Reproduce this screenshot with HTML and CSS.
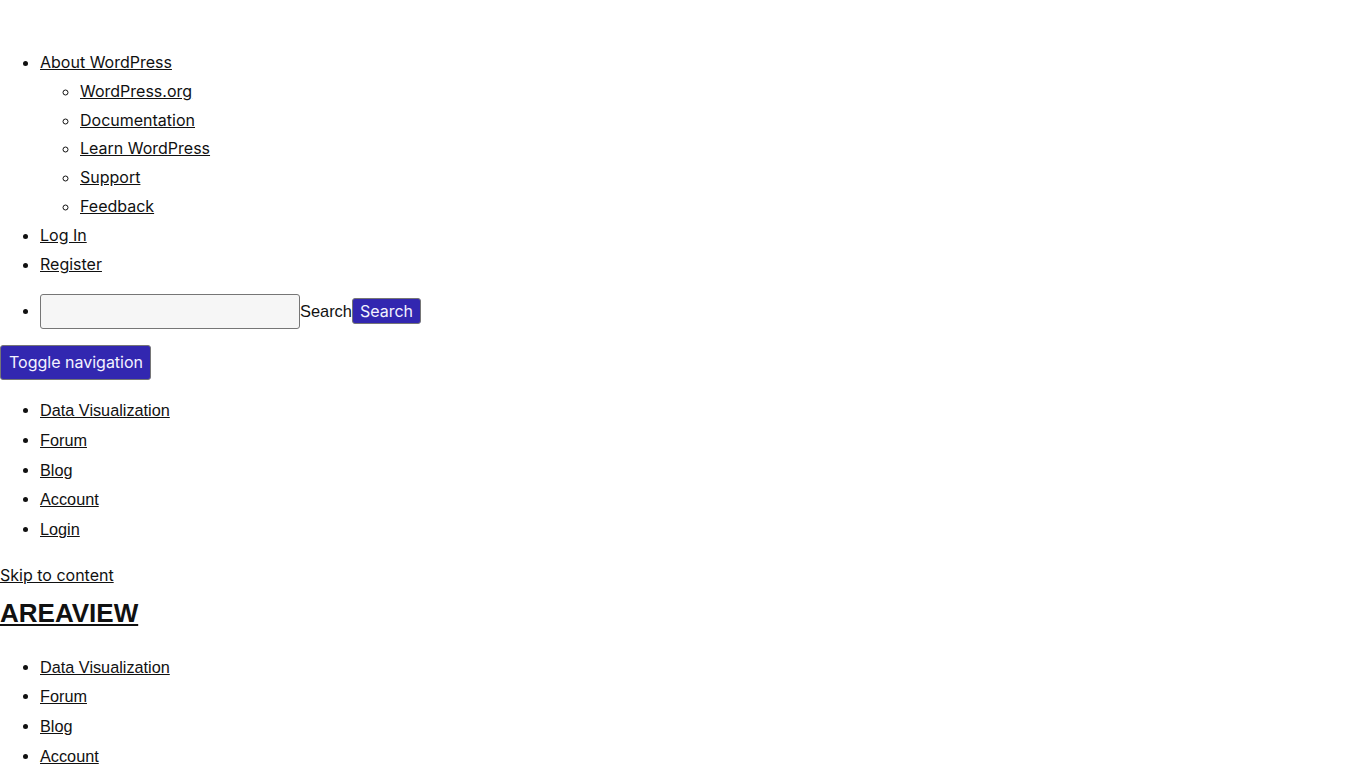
FILE: index.html
```html
<!DOCTYPE html>
<html lang="en">
<head>
  <meta charset="UTF-8" />
  <meta name="viewport" content="width=device-width, initial-scale=1.0"/>
  <title>AreaView – Data Visualization</title>
  <link rel="stylesheet" href="styles.css">
</head>
<body>
  <!-- Admin bar (unstyled fallback) -->
  <div id="wpadminbar" class="adminbar">
    <ul class="adminbar-menu">
      <li>
        <a href="#">About WordPress</a>
        <ul>
          <li><a href="#">WordPress.org</a></li>
          <li><a href="#">Documentation</a></li>
          <li><a href="#">Learn WordPress</a></li>
          <li><a href="#">Support</a></li>
          <li><a href="#">Feedback</a></li>
        </ul>
      </li>
      <li><a href="#">Log In</a></li>
      <li><a href="#">Register</a></li>
    </ul>
    <ul class="adminbar-menu adminbar-secondary">
      <li>
        <form class="adminbar-search" action="#" method="get">
          <input type="text" id="adminbar-search" name="s" class="search-input">
          <label for="adminbar-search" class="search-label">Search</label>
          <input type="submit" class="btn btn-small" value="Search">
        </form>
      </li>
    </ul>
  </div>

  <button type="button" class="btn nav-toggle">Toggle navigation</button>

  <ul class="site-menu">
    <li><a href="#">Data Visualization</a></li>
    <li><a href="#">Forum</a></li>
    <li><a href="#">Blog</a></li>
    <li><a href="#">Account</a></li>
    <li><a href="#">Login</a></li>
  </ul>

  <a class="skip-link" href="#content">Skip to content</a>

  <header class="site-header">
    <h1 class="site-title"><a href="#">AREAVIEW</a></h1>
    <ul class="site-menu">
      <li><a href="#">Data Visualization</a></li>
      <li><a href="#">Forum</a></li>
      <li><a href="#">Blog</a></li>
      <li><a href="#">Account</a></li>
      <li><a href="#">Login</a></li>
    </ul>
  </header>

  <main id="content" class="site-main">
    <h2>Area charts</h2>
    <p>Explore regional data with interactive stacked area charts.</p>
    <div class="chart-canvas"></div>
  </main>
</body>
</html>
```

FILE: styles.css
```css
html {
  color: #111;
}

body {
  margin: 0;
  font-family: 'Liberation Sans', Arial, sans-serif;
  font-size: 16px;
}

a {
  color: #111;
}

/* thin dark scrollbars */
::-webkit-scrollbar {
  width: 10px;
  height: 10px;
  background: transparent;
}

::-webkit-scrollbar-track,
::-webkit-scrollbar-corner {
  background: transparent;
}

::-webkit-scrollbar-thumb {
  background: #111;
  border: 2px solid transparent;
  border-radius: 5px;
  background-clip: padding-box;
}

.adminbar {
  padding-top: 32px;
  font-family: 'Inter', sans-serif;
  line-height: 1.8;
}

.adminbar ul ul {
  list-style: circle;
}

.adminbar-search {
  display: flex;
  align-items: center;
}

.search-input {
  width: 260px;
  height: 35px;
  box-sizing: border-box;
  margin: 0;
  background: #f6f6f6;
  border: 1px solid #767676;
  border-radius: 3px;
}

.search-label {
  font-family: 'Liberation Sans', Arial, sans-serif;
  font-size: 16.4px;
}

.btn {
  margin: 0;
  font-family: 'Inter', sans-serif;
  font-size: 16px;
  color: #f4f3ff;
  background: #3227b0;
  border: 1px solid #767676;
  border-radius: 3px;
}

.btn-small {
  height: 26px;
  margin-top: -2px;
  padding: 0 7px;
  line-height: 24px;
}

.nav-toggle {
  display: block;
  height: 35px;
  padding: 0 7px 1px 8px;
}

.site-menu {
  margin: 15.75px 0;
  font-size: 16.25px;
  line-height: 1.83;
}

.skip-link {
  display: block;
  width: max-content;
  font-family: 'Inter', sans-serif;
  line-height: 29px;
}

.site-title {
  margin: 8px 0 24px;
  font-size: 26px;
  line-height: 1.2;
}

.site-main {
  padding-bottom: 40px;
}

.chart-canvas {
  width: 2000px;
  height: 2000px;
}
```
